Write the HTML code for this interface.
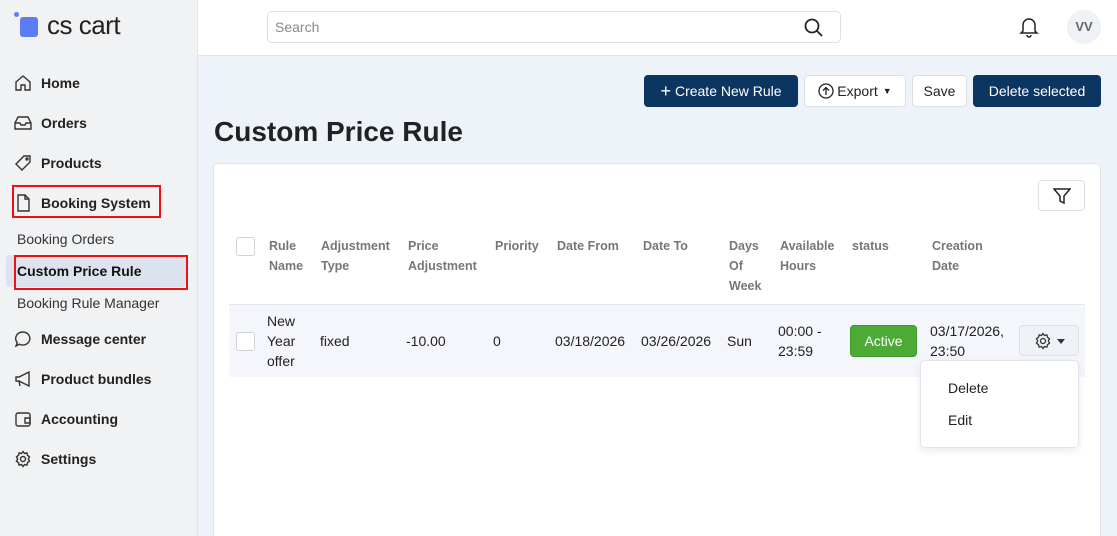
<!DOCTYPE html>
<html><head><meta charset="utf-8"><style>
*{box-sizing:border-box;margin:0;padding:0}
html{width:1117px;height:536px;overflow:hidden}
body{width:1117px;height:536px;overflow:hidden;font-family:"Liberation Sans",sans-serif;color:#222;background:#eef2f9;position:relative}
.sb{position:absolute;left:0;top:0;width:198px;height:536px;background:#f1f2f4;border-right:1px solid #e3e5e8}
.logo{position:absolute;left:14px;top:10px}
.logo .sq{position:absolute;left:6px;top:7px;width:18px;height:20px;background:#5b7cf5;border-radius:3px}
.logo .dot{position:absolute;left:0;top:2px;width:5px;height:5px;background:#5b7cf5;border-radius:50%}
.logo span{position:absolute;left:33px;top:0;font-size:26px;color:#222;white-space:nowrap;letter-spacing:-0.5px}
.nav{position:absolute;left:14px;font-size:14px;font-weight:bold;color:#222;display:flex;align-items:center}
.nav svg{width:18px;height:18px;margin-right:9px;fill:none;stroke:#333;stroke-width:1.4}
.sub{position:absolute;left:17px;font-size:14px;color:#333}
.hdr{position:absolute;left:198px;top:0;right:0;height:56px;background:#fff;border-bottom:1px solid #e3e5e8}
.search{position:absolute;left:267px;top:11px;width:574px;height:32px;border:1px solid #dde0e4;border-radius:5px;background:#fff;font-size:14px;color:#888;padding:7px 7px}
.btn{position:absolute;top:75px;height:32px;border-radius:4px;font-size:14px;display:flex;align-items:center;justify-content:center}
.dark{background:#0b3661;color:#fff}
.light{background:#fff;border:1px solid #dcdfe4;color:#222}
h1{position:absolute;left:214px;top:116px;font-size:28px;font-weight:bold;color:#222}
.card{position:absolute;left:213px;top:163px;width:888px;height:373px;background:#fff;border:1px solid #e1e4e9;border-bottom:none;border-radius:5px 5px 0 0}
.th{position:absolute;top:236px;font-size:12.5px;font-weight:bold;color:#777;line-height:20px}
.td{position:absolute;font-size:14px;color:#222;line-height:20px}
.cb{position:absolute;width:19px;height:19px;border:1px solid #cfd3d8;border-radius:3px;background:#fff}
</style></head><body>
<div class="sb">
 <div class="logo"><div class="dot"></div><div class="sq"></div><span>cs cart</span></div>
 <div class="nav" style="top:74px"><svg viewBox="0 0 18 18"><path d="M2 8L9 2l7 6v8H11v-5H7v5H2z"/></svg>Home</div>
 <div class="nav" style="top:114px"><svg viewBox="0 0 18 18"><path d="M1 9l3-6h10l3 6v6H1zM1 9h5l1 2h4l1-2h5"/></svg>Orders</div>
 <div class="nav" style="top:154px"><svg viewBox="0 0 18 18"><path d="M2 10l8-8h6v6l-8 8z"/><circle cx="13" cy="5" r="1"/></svg>Products</div>
 <div class="nav" style="top:194px"><svg viewBox="0 0 18 18"><path d="M4 1h7l4 4v12H4zM11 1v4h4"/></svg>Booking System</div>
 <div style="position:absolute;left:12px;top:185px;width:149px;height:33px;border:2px solid #e11"></div>
 <div class="sub" style="top:231px">Booking Orders</div>
 <div style="position:absolute;left:6px;top:255px;width:180px;height:32px;background:#dde3ee;border-radius:4px"></div>
 <div class="sub" style="top:263px;font-weight:bold;color:#111">Custom Price Rule</div>
 <div style="position:absolute;left:14px;top:255px;width:174px;height:35px;border:2px solid #e11"></div>
 <div class="sub" style="top:295px">Booking Rule Manager</div>
 <div class="nav" style="top:330px"><svg viewBox="0 0 18 18"><path d="M9 2a7 6.5 0 1 1-3.5 12.2L2 16l1.2-3.5A7 6.5 0 0 1 9 2z"/></svg>Message center</div>
 <div class="nav" style="top:370px"><svg viewBox="0 0 18 18"><path d="M2 7h3l10-5v14L5 11H2zM5 11l1 5"/></svg>Product bundles</div>
 <div class="nav" style="top:410px"><svg viewBox="0 0 18 18"><rect x="2" y="3" width="14" height="13" rx="2"/><path d="M11 8h5v5h-5z"/></svg>Accounting</div>
 <div class="nav" style="top:450px"><svg viewBox="0 0 18 18"><circle cx="9" cy="9" r="2.5"/><path d="M9 1.5l1.5 2 2.4-.6.6 2.4 2 1.5-1.2 2.2 1.2 2.2-2 1.5-.6 2.4-2.4-.6L9 16.5l-1.5-2-2.4.6-.6-2.4-2-1.5L3.7 9 2.5 6.8l2-1.5.6-2.4 2.4.6z"/></svg>Settings</div>
</div>
<div class="hdr"></div>
<div class="search">Search
 <svg style="position:absolute;right:17px;top:6px" width="19" height="19" viewBox="0 0 19 19" fill="none" stroke="#222" stroke-width="1.8"><circle cx="8" cy="8" r="6.5"/><path d="M13 13l5 5"/></svg></div>
<svg style="position:absolute;left:1019px;top:16px" width="20" height="22" viewBox="0 0 20 22" fill="none" stroke="#222" stroke-width="1.5"><path d="M4 15V9a6 6 0 0 1 12 0v6l2 2H2zM8 19a2 2 0 0 0 4 0"/></svg>
<div style="position:absolute;left:1067px;top:10px;width:34px;height:34px;border-radius:50%;background:#eef1f6;font-size:13px;font-weight:bold;color:#666;text-align:center;line-height:34px">VV</div>
<div class="btn dark" style="left:644px;width:154px"><span style="font-size:18px;margin-right:4px;font-weight:300">+</span>Create New Rule</div>
<div class="btn light" style="left:804px;width:102px"><svg width="16" height="16" viewBox="0 0 16 16" fill="none" stroke="#222" stroke-width="1.3" style="margin-right:3px"><circle cx="8" cy="8" r="7"/><path d="M8 12V4.5M5 7.5l3-3 3 3"/></svg>Export <span style="font-size:9px;margin-left:5px">&#9660;</span></div>
<div class="btn light" style="left:912px;width:55px">Save</div>
<div class="btn dark" style="left:973px;width:128px">Delete selected</div>
<h1>Custom Price Rule</h1>
<div class="card"></div>
<div style="position:absolute;left:1038px;top:180px;width:47px;height:31px;border:1px solid #dcdfe4;border-radius:4px;background:#fff"><svg style="position:absolute;left:14px;top:6px" width="18" height="18" viewBox="0 0 18 18" fill="none" stroke="#222" stroke-width="1.5"><path d="M1 2h16l-6 7v7l-4-2V9z"/></svg></div>
<div class="cb" style="left:236px;top:237px"></div>
<div class="th" style="left:269px">Rule<br>Name</div>
<div class="th" style="left:321px">Adjustment<br>Type</div>
<div class="th" style="left:408px">Price<br>Adjustment</div>
<div class="th" style="left:495px">Priority</div>
<div class="th" style="left:557px">Date From</div>
<div class="th" style="left:643px">Date To</div>
<div class="th" style="left:729px">Days<br>Of<br>Week</div>
<div class="th" style="left:780px">Available<br>Hours</div>
<div class="th" style="left:852px">status</div>
<div class="th" style="left:932px">Creation<br>Date</div>
<div style="position:absolute;left:229px;top:304px;width:856px;height:1px;background:#e3e6ea"></div>
<div style="position:absolute;left:229px;top:305px;width:856px;height:72px;background:#f4f6fb"></div>
<div class="cb" style="left:236px;top:332px"></div>
<div class="td" style="left:267px;top:311px">New<br>Year<br>offer</div>
<div class="td" style="left:320px;top:331px">fixed</div>
<div class="td" style="left:406px;top:331px">-10.00</div>
<div class="td" style="left:493px;top:331px">0</div>
<div class="td" style="left:555px;top:331px">03/18/2026</div>
<div class="td" style="left:641px;top:331px">03/26/2026</div>
<div class="td" style="left:727px;top:331px">Sun</div>
<div class="td" style="left:778px;top:321px">00:00 -<br>23:59</div>
<div style="position:absolute;left:850px;top:325px;width:67px;height:32px;background:#4caa35;border:1px solid #3f9a2b;border-radius:4px;color:#fff;font-size:14px;text-align:center;line-height:30px">Active</div>
<div class="td" style="left:930px;top:321px">03/17/2026,<br>23:50</div>
<div style="position:absolute;left:1019px;top:325px;width:60px;height:31px;background:#eef1f6;border:1px solid #dde1e7;border-radius:4px"><svg style="position:absolute;left:14px;top:6px" width="18" height="18" viewBox="0 0 18 18" fill="none" stroke="#333" stroke-width="1.3"><circle cx="9" cy="9" r="2.5"/><path d="M9 1.5l1.5 2 2.4-.6.6 2.4 2 1.5-1.2 2.2 1.2 2.2-2 1.5-.6 2.4-2.4-.6L9 16.5l-1.5-2-2.4.6-.6-2.4-2-1.5L3.7 9 2.5 6.8l2-1.5.6-2.4 2.4.6z"/></svg><svg style="position:absolute;left:37px;top:13px" width="8" height="5" viewBox="0 0 8 5"><path d="M0 0h8L4 5z" fill="#333"/></svg></div>
<div style="position:absolute;left:920px;top:360px;width:159px;height:88px;background:#fff;border:1px solid #e1e4e9;border-radius:5px;box-shadow:0 3px 8px rgba(0,0,0,.08)"><div class="td" style="left:27px;top:17px">Delete</div><div class="td" style="left:27px;top:49px">Edit</div></div>
</body></html>
